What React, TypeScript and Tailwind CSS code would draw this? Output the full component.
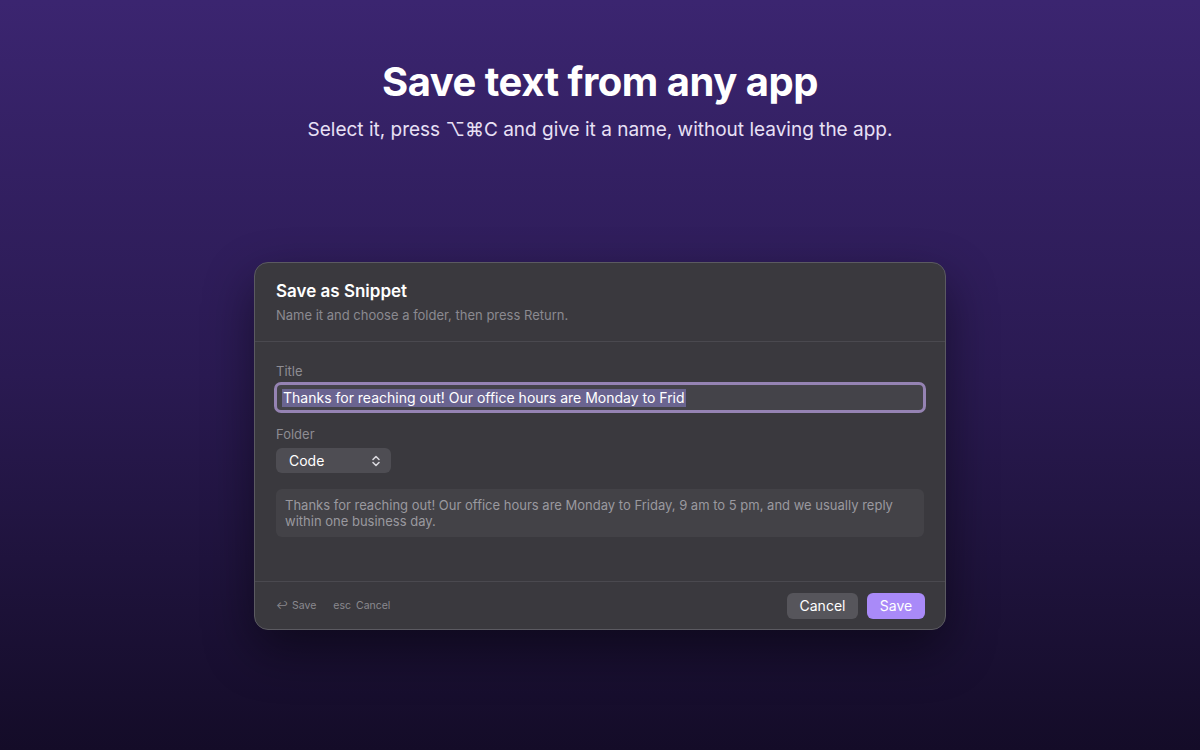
import React from "react";

function ChevronUpDown() {
  return (
    <svg width="10" height="12" viewBox="0 0 10 12" fill="none" stroke="currentColor" strokeWidth="1.6" strokeLinecap="round" strokeLinejoin="round">
      <path d="M2 4.5 5 1.5 8 4.5" />
      <path d="M2 7.5 5 10.5 8 7.5" />
    </svg>
  );
}

export default function App() {
  const snippet =
    "Thanks for reaching out! Our office hours are Monday to Friday, 9 am to 5 pm, and we usually reply within one business day.";

  return (
    <main
      className="h-[750px] w-full flex flex-col items-center bg-gradient-to-b from-[#3b2570] via-[#2a1a52] to-[#140c28] text-white"
      style={{ fontFamily: "Inter, 'Noto Sans', sans-serif" }}
    >
      <h1 className="mt-[56px] text-[40px] leading-[52px] font-bold tracking-[-0.5px]">Save text from any app</h1>
      <p className="mt-[10px] text-[19px] leading-[24px] text-[#e8e0f5]">
        Select it, press ⌥⌘C and give it a name, without leaving the app.
      </p>

      <div className="mt-[120px] w-[692px] h-[368px] rounded-[14px] bg-[#3a393e] border border-[#5b5a61] shadow-[0_20px_50px_rgba(0,0,0,0.45)] flex flex-col">
        <div className="px-[21px] pt-[17px] pb-[17px] border-b border-[#4a494f]">
          <h2 className="text-[17px] leading-[22px] font-semibold text-white">Save as Snippet</h2>
          <p className="mt-[4px] text-[13px] leading-[18px] text-[#8b8a90]">Name it and choose a folder, then press Return.</p>
        </div>

        <div className="flex-1 px-[21px] pt-[21px]">
          <label className="block text-[13px] leading-[16px] text-[#8e8d93]">Title</label>
          <div className="mt-[3px] -mx-[2px] h-[31px] rounded-[7px] border-[3px] border-[#9583b3] bg-[#444349] flex items-center px-[5px]">
            <span className="text-[14px] leading-[18px] text-white bg-[#6a6490] px-[1px]">
              Thanks for reaching out! Our office hours are Monday to Frid
            </span>
          </div>

          <label className="block mt-[13px] text-[13px] leading-[16px] text-[#8e8d93]">Folder</label>
          <button className="mt-[6px] w-[115px] h-[25px] rounded-[6px] bg-[#4e4d53] flex items-center justify-between pl-[13px] pr-[10px] text-[14px] text-white">
            <span>Code</span>
            <span className="text-[#d8d7dc]">
              <ChevronUpDown />
            </span>
          </button>

          <div className="mt-[16px] rounded-[6px] bg-[#434247] px-[9px] py-[8px] text-[13px] leading-[16px] text-[#9a999f]">
            {snippet}
          </div>
        </div>

        <div className="h-[48px] border-t border-[#4a494f] flex items-center justify-between pl-[21px] pr-[20px]">
          <div className="flex items-center gap-[17px] text-[10.5px] text-[#8a898f]">
            <span className="flex items-center gap-[4px]">
              <span>↩</span>
              <span>Save</span>
            </span>
            <span className="flex items-center gap-[5px]">
              <span>esc</span>
              <span>Cancel</span>
            </span>
          </div>
          <div className="flex items-center gap-[9px]">
            <button className="h-[26px] w-[71px] rounded-[6px] bg-[#56555b] text-[14px] text-white">Cancel</button>
            <button className="h-[26px] w-[58px] rounded-[6px] bg-[#a98af8] text-[14px] text-white">Save</button>
          </div>
        </div>
      </div>
    </main>
  );
}
